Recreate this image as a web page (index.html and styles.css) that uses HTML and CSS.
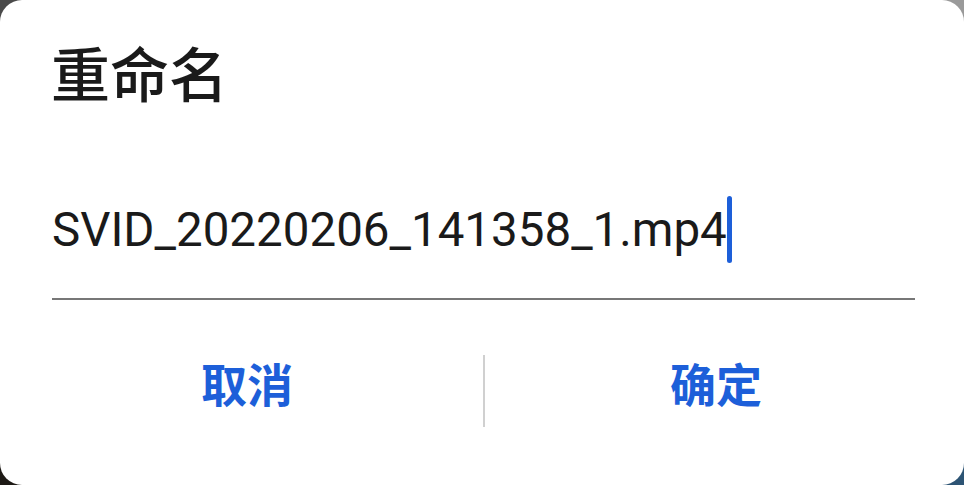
FILE: index.html
```html
<!DOCTYPE html>
<html lang="zh">
<head>
<meta charset="utf-8">
<title>重命名</title>
<link rel="stylesheet" href="styles.css">
</head>
<body>
<div class="dialog">
  <div class="title">重命名</div>
  <div class="field">
    <div class="line"><span class="value">SVID_20220206_141358_1.mp4</span><span class="caret"></span></div>
  </div>
  <div class="actions">
    <div class="btn btn-left">取消</div>
    <div class="divider"></div>
    <div class="btn btn-right">确定</div>
  </div>
</div>
</body>
</html>
```
FILE: styles.css
```css
html, body {
  margin: 0;
  padding: 0;
}
body {
  width: 964px;
  height: 485px;
  overflow: hidden;
  background: conic-gradient(#9a9a9a 0deg 90deg, #2d5474 90deg 180deg, #1e1a16 180deg 270deg, #4a4a4a 270deg 360deg);
}
.dialog {
  width: 964px;
  height: 485px;
  background: #ffffff;
  border-radius: 22px;
  display: flex;
  flex-direction: column;
  box-sizing: border-box;
}
.title {
  height: 130px;
  box-sizing: border-box;
  padding: 43px 0 0 51px;
  font-family: "Noto Sans CJK SC", sans-serif;
  font-weight: 500;
  font-size: 59px;
  line-height: 58px;
  color: #1a1a1a;
}
.field {
  height: 170px;
  box-sizing: border-box;
  margin: 0 49px 0 52px;
  padding-top: 66px;
  border-bottom: 2px solid #777777;
}
.line {
  display: flex;
  align-items: center;
}
.value {
  font-family: Roboto, "Noto Sans", sans-serif;
  font-size: 47.5px;
  line-height: 48px;
  color: #1a1a1a;
}
.caret {
  width: 5px;
  height: 67px;
  margin-left: 0;
  border-radius: 3px;
  background: #1d5fd9;
}
.actions {
  display: flex;
  margin: 55px 17px 0 11px;
  height: 72px;
}
.btn {
  align-self: flex-start;
  text-align: center;
  font-family: "Noto Sans CJK SC", sans-serif;
  font-weight: 700;
  font-size: 46px;
  line-height: 54px;
  color: #1d5fd9;
}
.btn-left {
  width: 472px;
}
.btn-right {
  flex: 1;
}
.divider {
  width: 2px;
  background: #d0d0d0;
}
```
